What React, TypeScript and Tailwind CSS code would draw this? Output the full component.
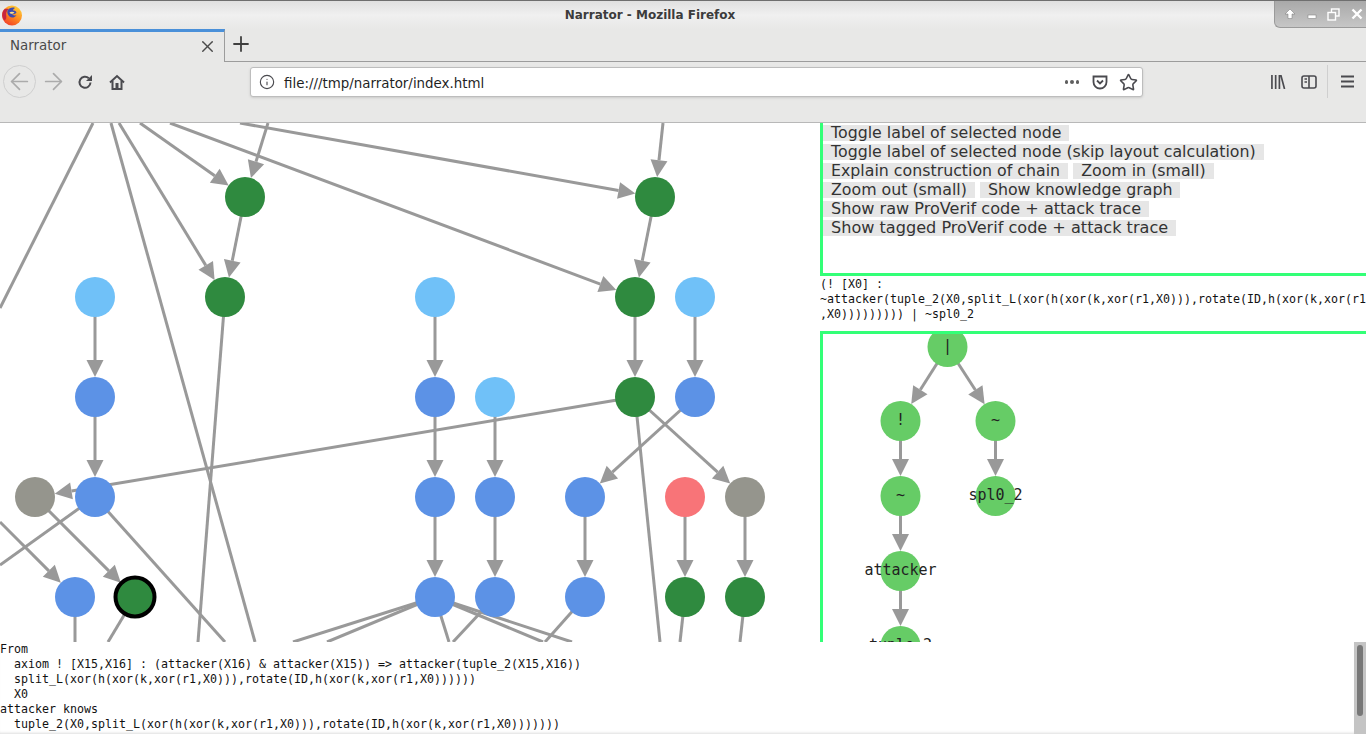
import { ArrowLeft, ArrowRight, Info, Plus, Star, X } from "lucide-react";

// Node colours used by the narrative graph
const DARK = "#2f8a3f";
const LIGHT = "#70c1f8";
const BLUE = "#5c92e6";
const GREY = "#95958d";
const RED = "#f87478";
const EDGE = "#999999";

type GraphNode = { x: number; y: number; fill: string; selected?: boolean };

const graphNodes: GraphNode[] = [
  { x: 245, y: 197, fill: DARK },
  { x: 655, y: 197, fill: DARK },
  { x: 225, y: 297, fill: DARK },
  { x: 635, y: 297, fill: DARK },
  { x: 635, y: 397, fill: DARK },
  { x: 685, y: 597, fill: DARK },
  { x: 745, y: 597, fill: DARK },
  { x: 135, y: 597, fill: DARK, selected: true },
  { x: 95, y: 297, fill: LIGHT },
  { x: 435, y: 297, fill: LIGHT },
  { x: 695, y: 297, fill: LIGHT },
  { x: 495, y: 397, fill: LIGHT },
  { x: 95, y: 397, fill: BLUE },
  { x: 435, y: 397, fill: BLUE },
  { x: 695, y: 397, fill: BLUE },
  { x: 95, y: 497, fill: BLUE },
  { x: 435, y: 497, fill: BLUE },
  { x: 495, y: 497, fill: BLUE },
  { x: 585, y: 497, fill: BLUE },
  { x: 75, y: 597, fill: BLUE },
  { x: 435, y: 597, fill: BLUE },
  { x: 495, y: 597, fill: BLUE },
  { x: 585, y: 597, fill: BLUE },
  { x: 35, y: 497, fill: GREY },
  { x: 745, y: 497, fill: GREY },
  { x: 685, y: 497, fill: RED },
];

// arrows: from a point to a node centre, the tip stops on the node rim
const arrows: number[][] = [
  [140, 123, 245, 197],
  [268, 123, 245, 197],
  [240, 123, 655, 197],
  [663, 123, 655, 197],
  [119, 123, 225, 297],
  [245, 197, 225, 297],
  [170, 123, 635, 297],
  [655, 197, 635, 297],
  [95, 297, 95, 397],
  [95, 397, 95, 497],
  [435, 297, 435, 397],
  [435, 397, 435, 497],
  [435, 497, 435, 597],
  [495, 397, 495, 497],
  [495, 497, 495, 597],
  [635, 297, 635, 397],
  [695, 297, 695, 397],
  [635, 397, 35, 497],
  [635, 397, 745, 497],
  [695, 397, 585, 497],
  [585, 497, 585, 597],
  [685, 497, 685, 597],
  [745, 497, 745, 597],
  [35, 497, 135, 597],
  [0, 522, 75, 597],
];

// plain lines that run off the canvas
const lines: number[][] = [
  [93, 123, 0, 308],
  [111, 123, 255, 642],
  [225, 297, 198, 642],
  [635, 397, 660, 642],
  [95, 497, 0, 565],
  [95, 497, 225, 642],
  [75, 597, 75, 642],
  [135, 597, 108, 642],
  [435, 597, 293, 642],
  [435, 597, 327, 642],
  [435, 597, 572, 642],
  [435, 597, 543, 642],
  [435, 597, 449, 642],
  [495, 597, 453, 642],
  [585, 597, 545, 642],
  [685, 597, 680, 642],
  [745, 597, 740, 642],
];

type Arrow = { x1: number; y1: number; x2: number; y2: number; head: string };

function makeArrow(x1: number, y1: number, x2: number, y2: number, r = 20): Arrow {
  const len = Math.hypot(x2 - x1, y2 - y1);
  const ux = (x2 - x1) / len;
  const uy = (y2 - y1) / len;
  const tipX = x2 - ux * r;
  const tipY = y2 - uy * r;
  const baseX = tipX - ux * 17;
  const baseY = tipY - uy * 17;
  const head = [
    `${tipX},${tipY}`,
    `${baseX - uy * 8.5},${baseY + ux * 8.5}`,
    `${baseX + uy * 8.5},${baseY - ux * 8.5}`,
  ].join(" ");
  return { x1, y1, x2: baseX, y2: baseY, head };
}

function Graph() {
  return (
    <svg width="820" height="519" viewBox="0 123 820 519" className="block shrink-0">
      {lines.map((l, i) => (
        <line key={i} x1={l[0]} y1={l[1]} x2={l[2]} y2={l[3]} stroke={EDGE} strokeWidth="3" />
      ))}
      {arrows.map((a, i) => {
        const arrow = makeArrow(a[0], a[1], a[2], a[3]);
        return (
          <g key={i}>
            <line x1={arrow.x1} y1={arrow.y1} x2={arrow.x2} y2={arrow.y2} stroke={EDGE} strokeWidth="3" />
            <polygon points={arrow.head} fill={EDGE} />
          </g>
        );
      })}
      {graphNodes.map((n, i) => (
        <circle
          key={i}
          cx={n.x}
          cy={n.y}
          r={n.selected ? 19.5 : 20}
          fill={n.fill}
          stroke={n.selected ? "#000000" : "none"}
          strokeWidth={n.selected ? 4 : 0}
        />
      ))}
    </svg>
  );
}

const treeNodes = [
  { x: 947.5, y: 347, label: "|" },
  { x: 900.5, y: 421, label: "!" },
  { x: 995.5, y: 421, label: "~" },
  { x: 900.5, y: 496, label: "~" },
  { x: 995.5, y: 496, label: "spl0_2" },
  { x: 900.5, y: 571, label: "attacker" },
  { x: 900.5, y: 646, label: "tuple_2" },
];

const treeEdges = [
  [947.5, 347, 900.5, 421],
  [947.5, 347, 995.5, 421],
  [900.5, 421, 900.5, 496],
  [995.5, 421, 995.5, 496],
  [900.5, 496, 900.5, 571],
  [900.5, 571, 900.5, 646],
];

function Tree() {
  return (
    <svg width="543" height="308" viewBox="823 334 543 308" className="block">
      {treeEdges.map((e, i) => {
        const arrow = makeArrow(e[0], e[1], e[2], e[3]);
        return (
          <g key={i}>
            <line x1={arrow.x1} y1={arrow.y1} x2={arrow.x2} y2={arrow.y2} stroke={EDGE} strokeWidth="3" />
            <polygon points={arrow.head} fill={EDGE} />
          </g>
        );
      })}
      {treeNodes.map((n) => (
        <g key={n.label + n.y}>
          <circle cx={n.x} cy={n.y} r="20" fill="#66cc66" />
          <text
            x={n.x}
            y={n.y + 4}
            textAnchor="middle"
            fontSize="15"
            fill="#222222"
            fontFamily='"DejaVu Sans Mono", monospace'
          >
            {n.label}
          </text>
        </g>
      ))}
    </svg>
  );
}

function FirefoxLogo() {
  return (
    <svg width="22" height="22" viewBox="0 0 22 22">
      <defs>
        <linearGradient id="ffBody" x1="0.8" y1="0" x2="0.2" y2="1">
          <stop offset="0" stopColor="#ffd43a" />
          <stop offset="0.5" stopColor="#ff8a1f" />
          <stop offset="1" stopColor="#f0392b" />
        </linearGradient>
      </defs>
      <circle cx="11" cy="11.5" r="10" fill="url(#ffBody)" />
      <path d="M3 5.500c-2.400 3-2.600 8 .6 11 1.500-1 2-3 1.600-5-.4-2 .2-4.500 2.400-6.500C5.600 4.500 4 4.500 3 5.500z" fill="#c8263f" />
      <path d="M6.500 6.500c1.500-2.500 5-3.500 7.500-2.500-1 .5-2 1.500-2 2.500 1.500 0 3 .5 3.500 2-1 1.500-3 2-4.500 1.500 1 1.500 3 2 4.500 1-1 2.500-5 3.500-7 1.500-2-2-2.500-4-2-6z" fill="#3c4bb0" />
      <path d="M8.500 8.500c1.500-1 3.500-1 5 0-.8 1-2.500 1.500-3.500 1.200-.8-.2-1.200-.6-1.500-1.200z" fill="#ffe28a" />
    </svg>
  );
}

function WindowControls() {
  return (
    <div className="flex h-[27px] w-[92px] items-center justify-between rounded-bl-[6px] border-b border-l border-[#9a9a9a] bg-gradient-to-b from-[#a9a9a9] to-[#c6c6c6] pl-[9px] pr-[3px]">
      <svg width="12" height="12" viewBox="0 0 12 12">
        <path d="M6 1 11 6H8v4.500H4V6H1z" fill="#ffffff" stroke="#777777" strokeWidth="0.5" />
      </svg>
      <svg width="10" height="12" viewBox="0 0 10 12">
        <rect x="1" y="7" width="8" height="3.500" fill="#ffffff" stroke="#777777" strokeWidth="0.5" />
      </svg>
      <svg width="13" height="13" viewBox="0 0 13 13" fill="none" stroke="#ffffff" strokeWidth="1.400">
        <rect x="4.500" y="1" width="7.500" height="7" />
        <rect x="1" y="4.500" width="7.500" height="7.500" fill="#b5b5b5" />
      </svg>
      <svg width="12" height="12" viewBox="0 0 12 12" stroke="#ffffff" strokeWidth="2.400">
        <path d="M1.500 1.500 10.500 10.500M10.500 1.500 1.500 10.500" />
      </svg>
    </div>
  );
}

function TitleBar() {
  return (
    <div className="flex h-[29px] items-start border-t border-[#6f6f6f] bg-gradient-to-b from-[#e0e0e0] via-[#f0f0f0] to-[#e8e8e7]">
      <div className="w-[22px] pl-[1px] pt-[3px]">
        <FirefoxLogo />
      </div>
      <div className="flex-1 pl-[4px] pt-[6px] text-center text-[12px] leading-4 font-bold text-[#3c3c3c]">
        Narrator - Mozilla Firefox
      </div>
      <WindowControls />
    </div>
  );
}

function TabStrip() {
  return (
    <div className="flex h-[33px] bg-[#e8e8e7]">
      <div className="flex w-[225px] items-center justify-between border-t-[3px] border-r border-t-[#4a90d9] border-r-[#9c9c9c] bg-[#e8e8e7] pb-[1px] pl-[10px] pr-[7px]">
        <span className="text-[13.400px] text-[#4a4a4a]">Narrator</span>
        <X size={19} strokeWidth={1.800} color="#4a4a4a" />
      </div>
      <div className="flex flex-1 items-center border-b border-[#9c9c9c] pb-[2px] pl-[4px]">
        <Plus size={24} strokeWidth={1.800} color="#3f3f3f" />
      </div>
    </div>
  );
}

function Toolbar() {
  return (
    <div className="flex h-[61px] items-start border-b border-[#b8b8b8] bg-[#e8e8e7] pt-[3px] text-[#4a4a4f]">
      <div className="ml-[3px] flex h-[33px] w-[33px] items-center justify-center rounded-full border border-[#cfcfcf]">
        <ArrowLeft size={27} strokeWidth={1.500} color="#ababab" />
      </div>
      <div className="ml-[1px] flex h-[33px] w-8 items-center justify-center">
        <ArrowRight size={27} strokeWidth={1.500} color="#ababab" />
      </div>
      <div className="flex h-[33px] w-8 items-center justify-center">
        <svg width="16" height="16" viewBox="0 0 16 16" fill="none" stroke="#4a4a4f" strokeWidth="2">
          <path d="M13.500 8.500a5.500 5.500 0 1 1-1.700-4.200" />
          <path d="M15 1v6H9z" fill="#4a4a4f" stroke="none" />
        </svg>
      </div>
      <div className="flex h-[33px] w-8 items-center justify-center">
        <svg width="16" height="16" viewBox="0 0 16 16" fill="none" stroke="#4a4a4f" strokeWidth="2">
          <path d="M1 8.500 8 2l7 6.500" />
          <path d="M3.500 7v8h9V7" />
          <rect x="6.500" y="9" width="3" height="6" fill="#4a4a4f" stroke="none" />
        </svg>
      </div>
      <div className="ml-[117px] mt-[2px] flex h-[30px] w-[893px] items-center rounded-[3px] border border-[#bdbdbd] bg-white pl-[8px] pr-[4px] shadow-sm">
        <Info size={16} strokeWidth={1.700} color="#4a4a4f" />
        <span className="ml-[9px] pt-[4px] text-[13.400px] text-[#1f1f1f]">file:///tmp/narrator/index.html</span>
        <span className="ml-auto flex gap-[2px] pr-[10px]">
          <span className="h-[3.500px] w-[3.500px] rounded-full bg-[#5f5f5f]" />
          <span className="h-[3.500px] w-[3.500px] rounded-full bg-[#5f5f5f]" />
          <span className="h-[3.500px] w-[3.500px] rounded-full bg-[#5f5f5f]" />
        </span>
        <svg width="16" height="16" viewBox="0 0 16 16" fill="none" stroke="#4a4a4f" strokeWidth="1.800" className="ml-[3px]">
          <path d="M1.500 2.500h13v5.500a6.500 6.500 0 0 1-13 0z" />
          <path d="m5 6.500 3 3 3-3" />
        </svg>
        <Star size={19} strokeWidth={2} className="ml-[11px]" />
      </div>
      <div className="ml-[119px] flex h-[33px] w-[31px] items-center justify-center">
        <svg width="16" height="14" viewBox="0 0 16 15" stroke="#4a4a4f" strokeWidth="1.800" fill="none">
          <path d="M1.500 0v15M5.500 0v15M9.500 0v15M11 0l4 15" />
        </svg>
      </div>
      <div className="flex h-[33px] w-[31px] items-center justify-center">
        <svg width="16" height="14" viewBox="0 0 16 14" fill="none" stroke="#4a4a4f" strokeWidth="1.600">
          <rect x="1" y="1" width="14" height="12" rx="2" />
          <path d="M8 1v12M3.500 4H6M3.500 7H6" />
        </svg>
      </div>
      <div className="ml-[3px] h-[33px] w-px bg-[#cfcfcf]" />
      <div className="flex h-[33px] w-[38px] items-center justify-center">
        <svg width="13" height="13" viewBox="0 0 13 13" stroke="#4a4a4f" strokeWidth="1.800">
          <path d="M0 1.500h13M0 6.500h13M0 11.500h13" />
        </svg>
      </div>
    </div>
  );
}

const buttons = [
  { label: "Toggle label of selected node", size: "text-[15.800px]" },
  { label: "Toggle label of selected node (skip layout calculation)", size: "text-[15.800px]" },
  { label: "Explain construction of chain", size: "text-[15.800px]" },
  { label: "Zoom in (small)", size: "text-[15.800px]" },
  { label: "Zoom out (small)", size: "text-[15.800px]" },
  { label: "Show knowledge graph", size: "text-[15.800px]" },
  { label: "Show raw ProVerif code + attack trace", size: "text-[16.100px]" },
  { label: "Show tagged ProVerif code + attack trace", size: "text-[16.100px]" },
];

function SidePanel() {
  return (
    <div className="flex min-w-0 flex-1 flex-col overflow-hidden">
      <div className="h-[153px] border-b-[3px] border-l-[3px] border-[#33ff77] text-[15.800px] leading-[19px] text-[#333333] [font-family:'DejaVu_Sans',sans-serif]">
        {buttons.map((b) => (
          <span key={b.label}>
            <button className={`inline-block h-4 bg-[#e6e6e6] px-2 leading-4 ${b.size}`}>{b.label}</button>{" "}
          </span>
        ))}
      </div>
      <pre className="mb-[9px] h-[46px] overflow-hidden pt-[1px] text-[11.630px] leading-[15px] text-[#111111] [font-family:'DejaVu_Sans_Mono',monospace]">
        {"(! [X0] :\n~attacker(tuple_2(X0,split_L(xor(h(xor(k,xor(r1,X0))),rotate(ID,h(xor(k,xor(r1\n,X0))))))))) | ~spl0_2"}
      </pre>
      <div className="h-[311px] overflow-hidden border-t-[3px] border-l-[3px] border-[#33ff77]">
        <Tree />
      </div>
    </div>
  );
}

const traceLog = `From
  axiom ! [X15,X16] : (attacker(X16) & attacker(X15)) => attacker(tuple_2(X15,X16))
  split_L(xor(h(xor(k,xor(r1,X0))),rotate(ID,h(xor(k,xor(r1,X0))))))
  X0
attacker knows
  tuple_2(X0,split_L(xor(h(xor(k,xor(r1,X0))),rotate(ID,h(xor(k,xor(r1,X0)))))))`;

function TraceLog() {
  return (
    <div className="flex h-[92px] overflow-hidden bg-white">
      <pre className="flex-1 text-[11.630px] leading-[15px] text-[#111111] shadow-[inset_0_-3px_3px_-2px_#dddddd] [font-family:'DejaVu_Sans_Mono',monospace]">
        {traceLog}
      </pre>
      <div className="h-full w-3 bg-[#c4c4c4] pl-[3px] pt-[3px]">
        <div className="h-[71px] w-[6px] rounded-full bg-[#777777]" />
      </div>
    </div>
  );
}

export default function App() {
  return (
    <div className="flex h-[734px] w-[1366px] flex-col overflow-hidden bg-white [font-family:'DejaVu_Sans',sans-serif]">
      <TitleBar />
      <TabStrip />
      <Toolbar />
      <div className="flex h-[519px]">
        <Graph />
        <SidePanel />
      </div>
      <TraceLog />
    </div>
  );
}
